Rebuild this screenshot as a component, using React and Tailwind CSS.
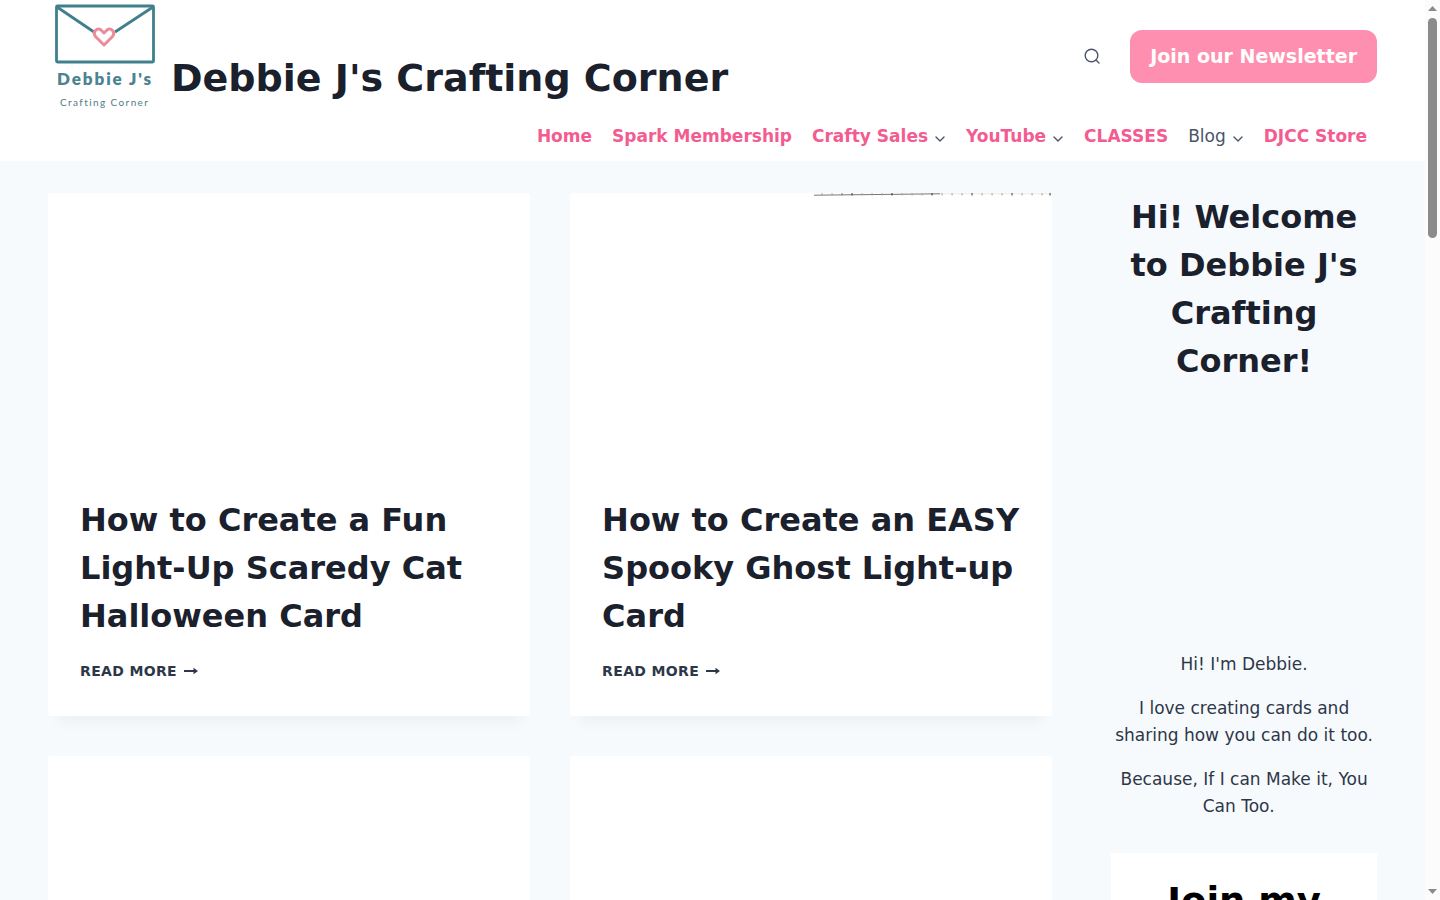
import React from "react";

const navItems = [
  { label: "Home" },
  { label: "Spark Membership" },
  { label: "Crafty Sales", hasMenu: true },
  { label: "YouTube", hasMenu: true },
  { label: "CLASSES" },
  { label: "Blog", hasMenu: true, plain: true },
  { label: "DJCC Store" },
];

const posts = [
  { id: 1, title: "How to Create a Fun Light-Up Scaredy Cat Halloween Card" },
  { id: 2, title: "How to Create an EASY Spooky Ghost Light-up Card", strip: true },
  { id: 3, title: "" },
  { id: 4, title: "" },
];

function Logo() {
  return (
    <svg width="114" height="112" viewBox="0 0 114 112" className="shrink-0" role="img" aria-label="Debbie J's Crafting Corner logo">
      <g fill="none" stroke="#3f808c" strokeWidth="2.800" strokeLinejoin="round">
        <rect x="8.500" y="6" width="97" height="56" rx="1" />
        <path d="M9 7 L46 32 M105 7 L67 32" />
      </g>
      <path
        d="M56 45 L47.500 36.500 C44 32 49 27 53 30 L56 33 L59 30 C63 27 68 32 64.500 36.500 Z"
        fill="none"
        stroke="#ec8c98"
        strokeWidth="3"
        strokeLinejoin="round"
      />
      <text x="9" y="85" fontSize="17" fontWeight="800" fill="#4b8490" letterSpacing="1.900" fontFamily="Lato, sans-serif">
        Debbie J's
      </text>
      <text x="12" y="106" fontSize="10" fill="#4f7d84" letterSpacing="1.400" fontFamily="Lato, sans-serif">
        Crafting Corner
      </text>
    </svg>
  );
}

function ChevronDown() {
  return (
    <svg width="12" height="10" viewBox="0 0 12 10" className="mt-1 text-[#4a5568]" aria-hidden="true">
      <path d="M2 3 L6 7 L10 3" fill="none" stroke="currentColor" strokeWidth="1.4" strokeLinecap="round" strokeLinejoin="round" />
    </svg>
  );
}

function Header() {
  return (
    <header className="bg-white px-12">
      <div className="flex h-28 justify-between">
        <a href="#" className="flex items-end gap-[9px]">
          <Logo />
          <span className="pb-[5px] text-[38px] leading-[57px] font-bold text-[#1a202c]">
            Debbie J's Crafting Corner
          </span>
        </a>
        <div className="flex items-center gap-7">
          <button type="button" aria-label="Search" className="p-0.5 text-[#4a5568]">
            <svg width="16" height="16" viewBox="0 0 16 16" fill="none" stroke="currentColor" strokeWidth="1.4" strokeLinecap="round">
              <circle cx="7.500" cy="7.500" r="6.300" />
              <path d="M12 12 L15 15" />
            </svg>
          </button>
          <a href="#" className="rounded-xl bg-[#ff8fb1] px-5 py-3 text-[19px] leading-[29px] font-bold text-white">
            Join our Newsletter
          </a>
        </div>
      </div>
      <nav className="flex h-[49px] justify-end">
        {navItems.map((item) => (
          <a
            key={item.label}
            href="#"
            className={
              item.plain
                ? "flex items-center gap-1.5 px-2.5 text-[17px] text-[#4a5568]"
                : "flex items-center gap-1.5 px-2.5 text-[17px] font-bold text-[#f35c91]"
            }
          >
            {item.label}
            {item.hasMenu && <ChevronDown />}
          </a>
        ))}
      </nav>
    </header>
  );
}

// bottom edge of the thumbnail that shows along the top of the card
function ThumbnailStrip() {
  const ticks = [252, 262, 272, 282, 292, 302, 312, 322, 332, 342, 352, 362, 372, 382, 392, 402, 412, 422, 432, 442, 452, 462, 472, 480];
  return (
    <svg viewBox="0 0 482 4" className="w-full" aria-hidden="true">
      <path d="M244 2.200 L370 0.800" stroke="#77777a" strokeWidth="1" />
      <path d="M370 0.800 H480" stroke="#ecece2" strokeWidth="1" />
      {ticks.map((x, i) => (
        <path key={x} d={`M${x} 0 V2.500`} stroke={i === 2 ? "#b0607a" : i % 4 === 3 ? "#333333" : "#a8a890"} strokeWidth="1" />
      ))}
    </svg>
  );
}

function PostCard({ post }) {
  return (
    <article className="rounded-[3px] bg-white shadow-[0_15px_15px_-10px_rgba(0,0,0,0.05)]">
      <div className="aspect-video">{post.strip && <ThumbnailStrip />}</div>
      <div className="min-h-[252px] p-8">
        {post.title && (
          <>
            <h2 className="text-[32px] leading-[48px] font-bold text-[#1a202c]">
              <a href="#">{post.title}</a>
            </h2>
            <a href="#" className="mt-[18px] flex items-center gap-[7px] text-[14px] leading-[26px] font-bold tracking-wide text-[#2d3748] uppercase">
              Read More
              <svg width="14" height="8" viewBox="0 0 14 8" aria-hidden="true">
                <path d="M0 3 H9.500 V0.800 L14 4 L9.500 7.200 V5 H0 Z" fill="currentColor" />
              </svg>
            </a>
          </>
        )}
      </div>
    </article>
  );
}

function Sidebar() {
  return (
    <aside className="w-1/5 shrink-0 text-center text-[17px] leading-[27px] text-[#2d3748]">
      <h2 className="text-[32px] leading-[48px] font-bold text-[#1a202c]">
        Hi! Welcome to Debbie J's Crafting Corner!
      </h2>
      <div className="aspect-square" />
      <div className="-mx-1 space-y-[17px]">
        <p>Hi! I'm Debbie.</p>
        <p>I love creating cards and sharing how you can do it too.</p>
        <p>Because, If I can Make it, You Can Too.&nbsp;&nbsp;</p>
      </div>
      <div className="mt-[33px] bg-white px-6 py-[21px]">
        <h2 className="text-[37px] leading-[56px] font-bold text-black">Join my</h2>
      </div>
    </aside>
  );
}

function ScrollRail() {
  return (
    <div className="flex w-[15px] shrink-0 flex-col items-center justify-between bg-[#fcfcfc] py-1.5" aria-hidden="true">
      <div className="flex flex-col items-center gap-[7px]">
        <svg width="9" height="5" viewBox="0 0 9 5"><path d="M0 5 L4.500 0 L9 5 Z" fill="#8b8b8b" /></svg>
        <div className="h-[220px] w-[9px] rounded-full bg-[#8b8b8b]" />
      </div>
      <svg width="9" height="5" viewBox="0 0 9 5"><path d="M0 0 L4.500 5 L9 0 Z" fill="#8b8b8b" /></svg>
    </div>
  );
}

function App() {
  return (
    <div className="flex h-screen overflow-hidden font-['DejaVu_Sans',sans-serif]">
      <div className="min-w-0 flex-1 overflow-hidden bg-[#f7fafc]">
        <Header />
        <div className="flex gap-[59px] px-12 py-8">
          <main className="grid flex-1 grid-cols-2 content-start gap-10">
            {posts.map((post) => (
              <PostCard key={post.id} post={post} />
            ))}
          </main>
          <Sidebar />
        </div>
      </div>
      <ScrollRail />
    </div>
  );
}

export default App;
